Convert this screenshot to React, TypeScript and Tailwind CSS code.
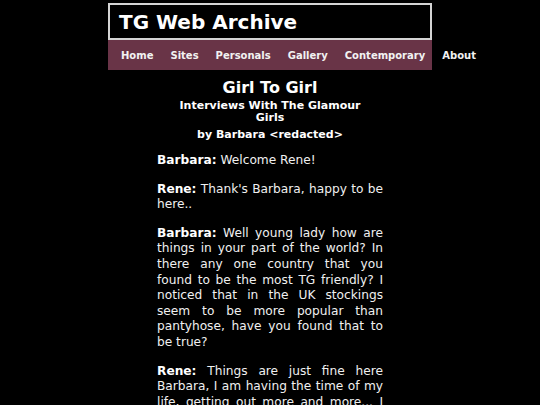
export default function App() {
  const nav = ["Home", "Sites", "Personals", "Gallery", "Contemporary", "About"];

  return (
    <div className="min-h-screen bg-black text-white font-['DejaVu_Sans',Verdana,sans-serif]">
      <div className="w-[324px] mx-auto pt-[3px]">
        <div className="border-2 border-[#d4d4d4] h-[37px] pl-[9px] flex items-center">
          <h1 className="text-[20px] font-bold leading-none">TG Web Archive</h1>
        </div>
        <nav className="bg-[#693447] h-[30px] flex items-center pl-[13px] gap-[17px] whitespace-nowrap">
          {nav.map((n) => (
            <a key={n} href="#" className="shrink-0 text-[10px] font-bold text-[#f2f2f2]">
              {n}
            </a>
          ))}
        </nav>
      </div>

      <div className="w-[226px] mx-auto">
        <div className="text-center">
          <h2 className="text-[16px] font-bold mt-[8px] leading-tight">Girl To Girl</h2>
          <h3 className="text-[11px] font-bold mt-[2px] leading-[12px] w-[200px] mx-auto">
            Interviews With The Glamour Girls
          </h3>
          <h4 className="text-[11px] font-bold mt-[4px] leading-[14px]">by Barbara &lt;redacted&gt;</h4>
        </div>

        <div className="text-[12.2px] leading-[15.6px] text-justify text-[#f0f0f0] mt-[11px] flex flex-col gap-[13px]">
          <p>
            <b className="text-white">Barbara:</b> Welcome Rene!
          </p>
          <p>
            <b className="text-white">Rene:</b> Thank's Barbara, happy to be here..
          </p>
          <p>
            <b className="text-white">Barbara:</b> Well young lady how are things in your part of the world? In there
            any one country that you found to be the most TG friendly? I noticed that in the UK stockings seem to be
            more popular than pantyhose, have you found that to be true?
          </p>
          <p>
            <b className="text-white">Rene:</b> Things are just fine here Barbara, I am having the time of my life,
            getting out more and more... I have been to many places and everywhere I go the people are friendly.
          </p>
        </div>
      </div>
    </div>
  );
}
